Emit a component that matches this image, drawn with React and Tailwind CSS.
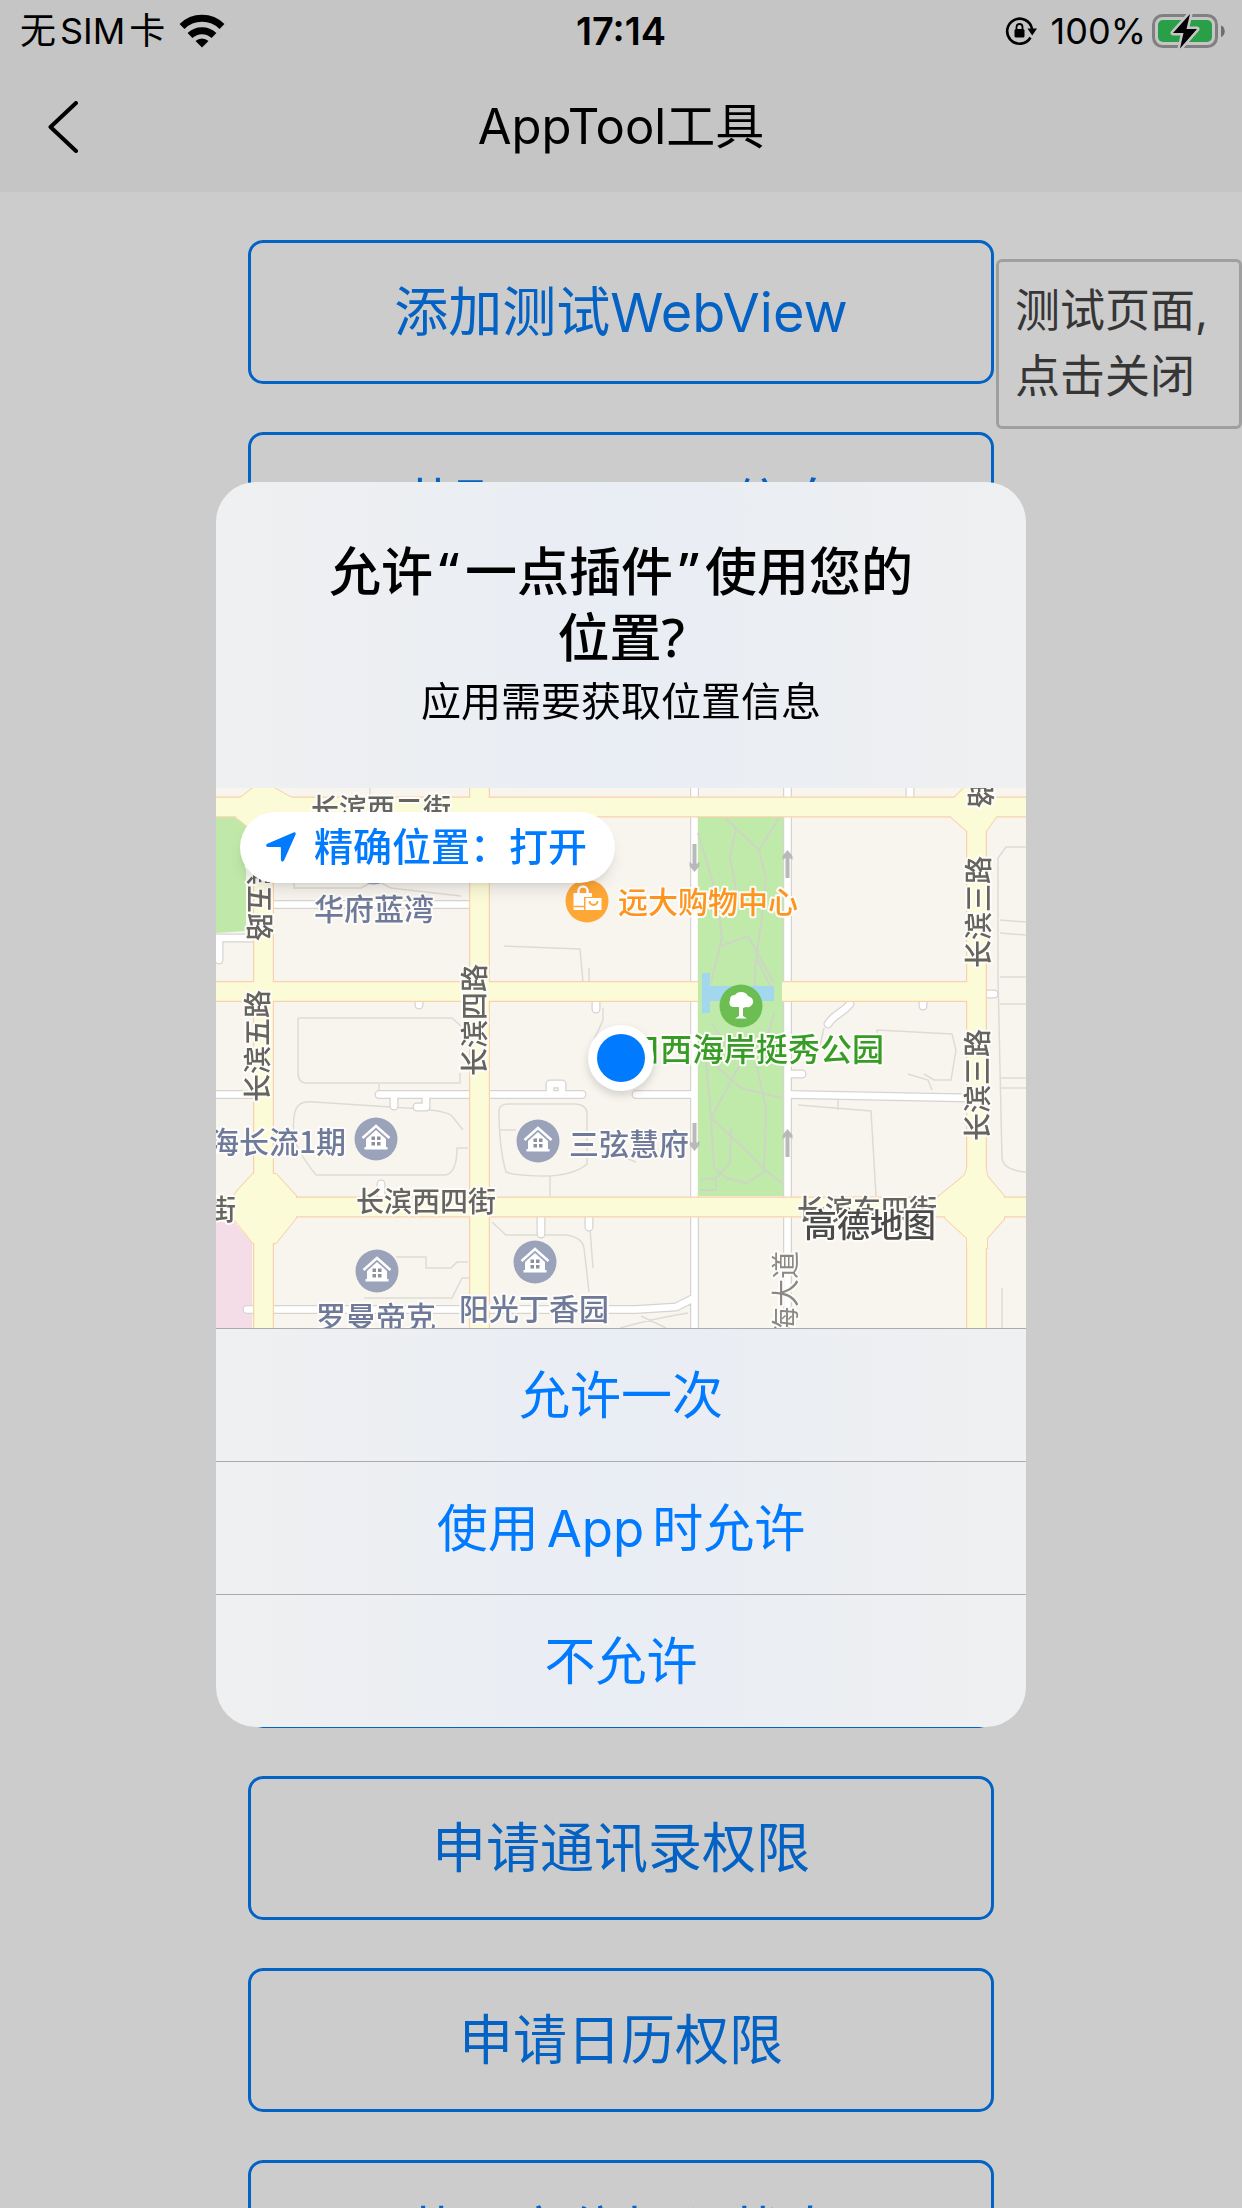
const tools = [
  "添加测试WebView",
  "获取DeviceId信息",
  "获取设备信息",
  "申请定位权限",
  "申请相机权限",
  "申请相册权限",
  "申请麦克风权限",
  "申请蓝牙权限",
  "申请通讯录权限",
  "申请日历权限",
  "获取定位权限状态",
];

const choices = [
  { id: "once", label: "允许一次" },
  {
    id: "in-use",
    label: (
      <>
        使用<span className="mx-2">App</span>时允许
      </>
    ),
  },
  { id: "deny", label: "不允许" },
];

function WifiIcon() {
  return (
    <svg className="h-[34px] w-[46px]" viewBox="0 0 46 34" fill="none" stroke="#000" strokeWidth="7">
      <path d="M3 12.5a28.500 28.500 0 0 1 40 0" />
      <path d="M11 21.500a17.500 17.500 0 0 1 24 0" />
      <path d="M16.500 27a9.500 9.500 0 0 1 13 0L23 33.500z" fill="#000" stroke="none" />
    </svg>
  );
}

function RotationLockIcon() {
  return (
    <svg className="h-[34px] w-8" viewBox="0 0 32 30" fill="none">
      <path d="M25.500 21.500A12.500 12.500 0 1 1 27 13" stroke="#000" strokeWidth="2.600" />
      <path d="M22.500 12.500h9.500l-4.800 7z" fill="#000" />
      <rect x="9.500" y="13" width="10" height="8.500" rx="1.500" fill="#000" />
      <path d="M11.500 13.500v-2.500a3 3 0 0 1 6 0v2.500" stroke="#000" strokeWidth="1.800" />
    </svg>
  );
}

function BatteryIcon() {
  return (
    <svg className="h-9 w-[74px]" viewBox="0 0 74 36" fill="none">
      <rect x="1.500" y="2.500" width="63" height="31" rx="9" stroke="#a0a0a0" strokeWidth="3" />
      <path d="M69 12.500c5 1.500 5 10 0 11.500z" fill="#8a8a8a" />
      <rect x="6" y="7" width="54" height="22" rx="5" fill="#34c759" />
      <path
        d="M38 1L21 20h10.500L28 35.500 45 16H34.500z"
        fill="#000"
        stroke="#f7f7f7"
        strokeWidth="5"
        paintOrder="stroke"
        strokeLinejoin="round"
      />
    </svg>
  );
}

function Label({ x, y, size = 28, color = "#66645f", turn = 0, anchor = "start", weight = 500, children }) {
  return (
    <text
      transform={`translate(${x} ${y}) rotate(${turn})`}
      fontSize={size}
      fontWeight={weight}
      fill={color}
      stroke="#fdfcf8"
      strokeWidth="4"
      strokeLinejoin="round"
      paintOrder="stroke"
      textAnchor={anchor}
    >
      {children}
    </text>
  );
}

function HousePin({ x, y }) {
  return (
    <g transform={`translate(${x} ${y})`}>
      <circle r="21.500" fill="#9ba3ba" />
      <path d="M-13.500 -1L0 -13 13.500 -1" fill="none" stroke="#fff" strokeWidth="2.500" />
      <path d="M-10 0L0 -9 10 0V8h1.500v2.500h-23V8h1.500z" fill="#fff" />
      <path d="M-4.500 -2.500h3.500v3.500h-3.500zM1 -2.500h3.500v3.500H1zM-4.500 3h3.500v3.500h-3.500zM1 3h3.500v3.500H1z" fill="#8c8f9c" />
    </g>
  );
}

function Arrow({ x, y, up }) {
  return (
    <path
      transform={`translate(${x} ${y}) rotate(${up ? 180 : 0})`}
      d="M-2 -14h4V6l3 -2v4L0 14 -5 8V4l3 2z"
      fill="#b9b9b9"
    />
  );
}

const yellowRoads =
  "M-5 19H815M47.500 -5V545M263.500 -5V545M760.500 -5V545M-5 203.500H482M566 203.500H765M-5 419H815";
const junctions =
  "M22 402L37 386H60L80 408V430L60 455H37L18 431 10 419zM722 409L749 387 751 380H770L771 388 788 408V431L771 450V460H751V450L730 431zM735 29L751 43H770L780 29V10L770 0H748L738 10zM20 29L37 43H58L76 29V10L58 0H37L24 10z";
const whiteRoads =
  "M478.500 -5V545M571.500 -5V545M58 116.500H254M163 306.500H366M-5 306.500H37M420 306.500H475M575 306.500L755 310M31 521.500H420L460 519 478 510M203 203V217M380 203V221M707 205V218M694 -2V14M178 310V318M210 310V319H201M334 302V296H346V302M325 430V446M373 430V439M165 408V396M-3 150H38M3 150V172M612 236C618 226 626 226 634 216M770 206H778M575 286H586";
const thinLines =
  "M82 230H236L245 238M82 230V284Q82 295 90 295H244V285M163 296V302M82 318Q86 313 98 314L190 320Q230 322 236 328L247 342M82 318Q76 324 78 348Q80 362 100 387H230Q241 384 241 360H252M283 322Q284 316 292 316H360Q371 317 371 326V376Q360 386 334 388Q300 388 290 384Q283 360 283 322M283 342H300M334 388V408M78 95V100H145L160 92 175 100 245 108M288 158L364 161 367 194M373 180V202M387 220V232L378 252M276 434L290 447H350Q366 449 368 460L373 504M374 441L377 480M180 469H210V480H235L241 474H252M148 510H236L246 490H253M582 317L655 323 660 408M622 311V322M661 260V242L736 246 740 262 735 292H718L708 286M692 286L712 292 716 302M786 540V500M810 59H790L782 70V190L786 370Q787 382 810 384M784 132L810 134M784 145L810 147M784 189H810M784 216H810M785 290H810M785 300H810M154 0V8M410 370L420 374M404 540Q440 530 472 525M425 528L450 540M608 240L604 258";
const parkPaths =
  "M482 45L500 105 506 150 495 195M509 30L520 40 514 70 522 112M509 30L543 62 550 90 546 130 540 170 558 205M563 30L543 62M505 158L532 148 558 195M540 170L538 205M490 270L495 330 530 362 550 383 566 395M525 275L495 330 498 380 510 390 530 395 550 383M540 275L550 320 548 383M500 278L525 300 566 310M515 340L514 375 500 390 484 392M484 402H500V392M496 235L512 262M558 225L550 255";

function MapView() {
  return (
    <svg
      className="block w-full font-['Noto_Sans_CJK_SC',sans-serif]"
      viewBox="0 0 810 540"
      role="img"
      aria-label="地图"
    >
      <rect width="810" height="540" fill="#f8f5ef" />
      <path d="M0 29H18L30 38V143L0 145z" fill="#bfe8a9" />
      <path d="M0 434H18L36 455V540H0z" fill="#f4dde6" />
      <path d={thinLines} fill="none" stroke="#dedbd5" strokeWidth="1.500" />

      <g fill="none" strokeLinecap="round" strokeLinejoin="round">
        <path d={whiteRoads} stroke="#d6d4d0" strokeWidth="9" />
        <path d={whiteRoads} stroke="#fff" strokeWidth="6.500" />
      </g>

      <path d="M482 29H567V408H482z" fill="#bfeaa9" />
      <path d={parkPaths} fill="none" stroke="#cdd6c4" strokeWidth="2" strokeLinejoin="round" />
      <path d="M486 185H494V198H558V213H494V225H486z" fill="#a3d7ed" />

      <path d={yellowRoads} fill="none" stroke="#f9d2ac" strokeWidth="21" />
      <path d={junctions} fill="#fcfbd8" stroke="#f9d2ac" strokeWidth="2" />
      <path d={yellowRoads} fill="none" stroke="#fcfbd8" strokeWidth="18.500" />
      <path d={junctions} fill="#fcfbd8" />

      <Arrow x={478.5} y={70} />
      <Arrow x={571.5} y={76} up />
      <Arrow x={478.5} y={349} />
      <Arrow x={571.5} y={355} up />

      <Label x={95} y={31}>长滨西二街</Label>
      <Label x={33} y={41} turn={90}>长滨五路</Label>
      <Label x={52} y={314} turn={-90}>长滨五路</Label>
      <Label x={269} y={288} turn={-90}>长滨四路</Label>
      <Label x={754} y={-92} turn={90}>长滨三路</Label>
      <Label x={773} y={180} turn={-90}>长滨三路</Label>
      <Label x={772} y={353} turn={-90}>长滨三路</Label>
      <Label x={580} y={575} turn={-90} color="#8b8985" weight={400}>滨海大道</Label>
      <Label x={140} y={424}>长滨西四街</Label>
      <Label x={20} y={432} anchor="end">长滨西四街</Label>
      <Label x={581} y={432}>长滨东四街</Label>
      <Label x={588} y={449} size={33} color="#4a4a4a">高德地图</Label>

      <circle cx="158" cy="75" r="21.500" fill="#9ba3ba" />
      <HousePin x={160} y={351} />
      <HousePin x={322} y={353} />
      <HousePin x={161} y={483} />
      <HousePin x={319} y={474} />
      <Label x={98} y={132} size={30} color="#6f7a9b">华府蓝湾</Label>
      <Label x={130} y={365} size={30} color="#6f7a9b" anchor="end">海长流1期</Label>
      <Label x={353} y={367} size={30} color="#6f7a9b">三弦慧府</Label>
      <Label x={100} y={540} size={30} color="#6f7a9b">罗曼帝克</Label>
      <Label x={243} y={532} size={30} color="#6f7a9b">阳光丁香园</Label>

      <g transform="translate(371 113)">
        <circle r="21.500" fill="#ffa736" />
        <path d="M-13.500 -8H5V-4H-3V9H-13.500z" fill="#fff" />
        <path d="M-8.500 -8V-10a4.500 4.500 0 0 1 9 0V-8" fill="none" stroke="#fff" strokeWidth="2.500" />
        <path d="M-1.500 -3H14.500V9H-1.500z" fill="#fff" />
        <path d="M2.500 0a4 4 0 0 0 8 0" fill="none" stroke="#ffa736" strokeWidth="2" />
        <path d="M-13.500 5.500H-2" stroke="#ffa736" strokeWidth="1.500" />
      </g>
      <Label x={402} y={125} size={30} color="#fd9420">远大购物中心</Label>

      <circle cx="525" cy="218" r="21.500" fill="#6cbe53" />
      <path
        d="M523 228V219L517 219Q512 218 514 212Q514 207 519 207Q521 204 525 204Q530 204 532 208Q538 210 537 215Q535 220 530 219L527 220V228L531 230.500H519z"
        fill="#fff"
      />
      <Label x={668} y={273} size={32} color="#379c25" anchor="end">海口西海岸挺秀公园</Label>

      <circle cx="405" cy="270" r="33" fill="#fff" className="drop-shadow-lg" />
      <circle cx="405" cy="270" r="24" fill="#007aff" />
    </svg>
  );
}

function LocationDialog() {
  return (
    <div className="fixed inset-0 flex items-center justify-center bg-black/20">
      <div
        role="dialog"
        aria-labelledby="dialog-title"
        className="w-[810px] max-w-full overflow-hidden rounded-[40px] bg-linear-to-r from-[#eff0f1] via-[#e9edf4] to-[#eff0f1] text-center"
      >
        <div className="px-28 pt-14 pb-[62px]">
          <h2
            id="dialog-title"
            className="font-['Noto_Sans','Noto_Sans_CJK_SC',sans-serif] text-[52px] leading-[66px] font-medium"
          >
            允许<span className="mx-1.5">“</span>一点插件<span className="mx-1.5">”</span>使用您的位置?
          </h2>
          <p className="mt-2 text-[40px] leading-[48px]">应用需要获取位置信息</p>
        </div>
        <div className="relative">
          <MapView />
          <button
            type="button"
            className="absolute top-6 left-6 flex h-[71px] items-center gap-[18px] rounded-full bg-white pr-7 pl-[26px] text-[39px] font-medium text-[#007aff] shadow-lg"
          >
            <svg className="size-[30px]" viewBox="0 0 30 30" fill="currentColor">
              <path d="M27.500 .4L1.300 11.800Q-1.200 13.600 1.500 14.900H14Q14.800 14.900 14.900 15.800V28Q16.300 31 18 28.500L29.600 2.500Q30.200 -.4 27.500 .4z" />
            </svg>
            精确位置：打开
          </button>
        </div>
        {choices.map((choice) => (
          <button
            key={choice.id}
            type="button"
            className="block h-[133px] w-full border-t border-[#a9abae] pt-1 text-[51px] text-[#007aff]"
          >
            {choice.label}
          </button>
        ))}
      </div>
    </div>
  );
}

export default function App() {
  return (
    <div className="h-screen overflow-hidden bg-white font-['Inter','Noto_Sans_CJK_SC',sans-serif] text-black">
      <header className="bg-[#f7f7f7]">
        <div className="grid h-[62px] grid-cols-3 items-center px-4 text-[36px] leading-[60px]">
          <div className="flex items-center pl-1">
            无<span className="mx-1">SIM</span>卡
            <span className="pl-3.5">
              <WifiIcon />
            </span>
          </div>
          <div className="text-center text-[38px] font-semibold">17:14</div>
          <div className="flex items-center justify-end gap-1.5">
            <RotationLockIcon />
            <span className="ml-2">100%</span>
            <BatteryIcon />
          </div>
        </div>
        <div className="grid h-[130px] grid-cols-[80px_1fr_80px] items-center px-4">
          <button type="button" aria-label="返回" className="pl-8">
            <svg className="h-[52px] w-8" viewBox="0 0 32 52" fill="none" stroke="#000" strokeWidth="4" strokeLinecap="round">
              <path d="M28 2L2.500 26 28 50" strokeLinejoin="round" />
            </svg>
          </button>
          <h1 className="text-center text-[49px]">AppTool工具</h1>
        </div>
      </header>

      <main className="relative flex flex-col items-center gap-12 pt-12">
        {tools.map((tool) => (
          <button
            key={tool}
            type="button"
            className="h-36 w-3/5 shrink-0 rounded-[15px] border-3 border-[#047bf4] text-[54px] text-[#047bf4]"
          >
            {tool}
          </button>
        ))}
        <button
          type="button"
          className="absolute top-[67px] right-0 rounded-md border-3 border-[#c7c7c7] py-4 pr-[31px] pl-4 text-left text-[45px] leading-[66px] text-[#444]"
        >
          测试页面,
          <br />
          点击关闭
        </button>
      </main>

      <LocationDialog />
    </div>
  );
}
